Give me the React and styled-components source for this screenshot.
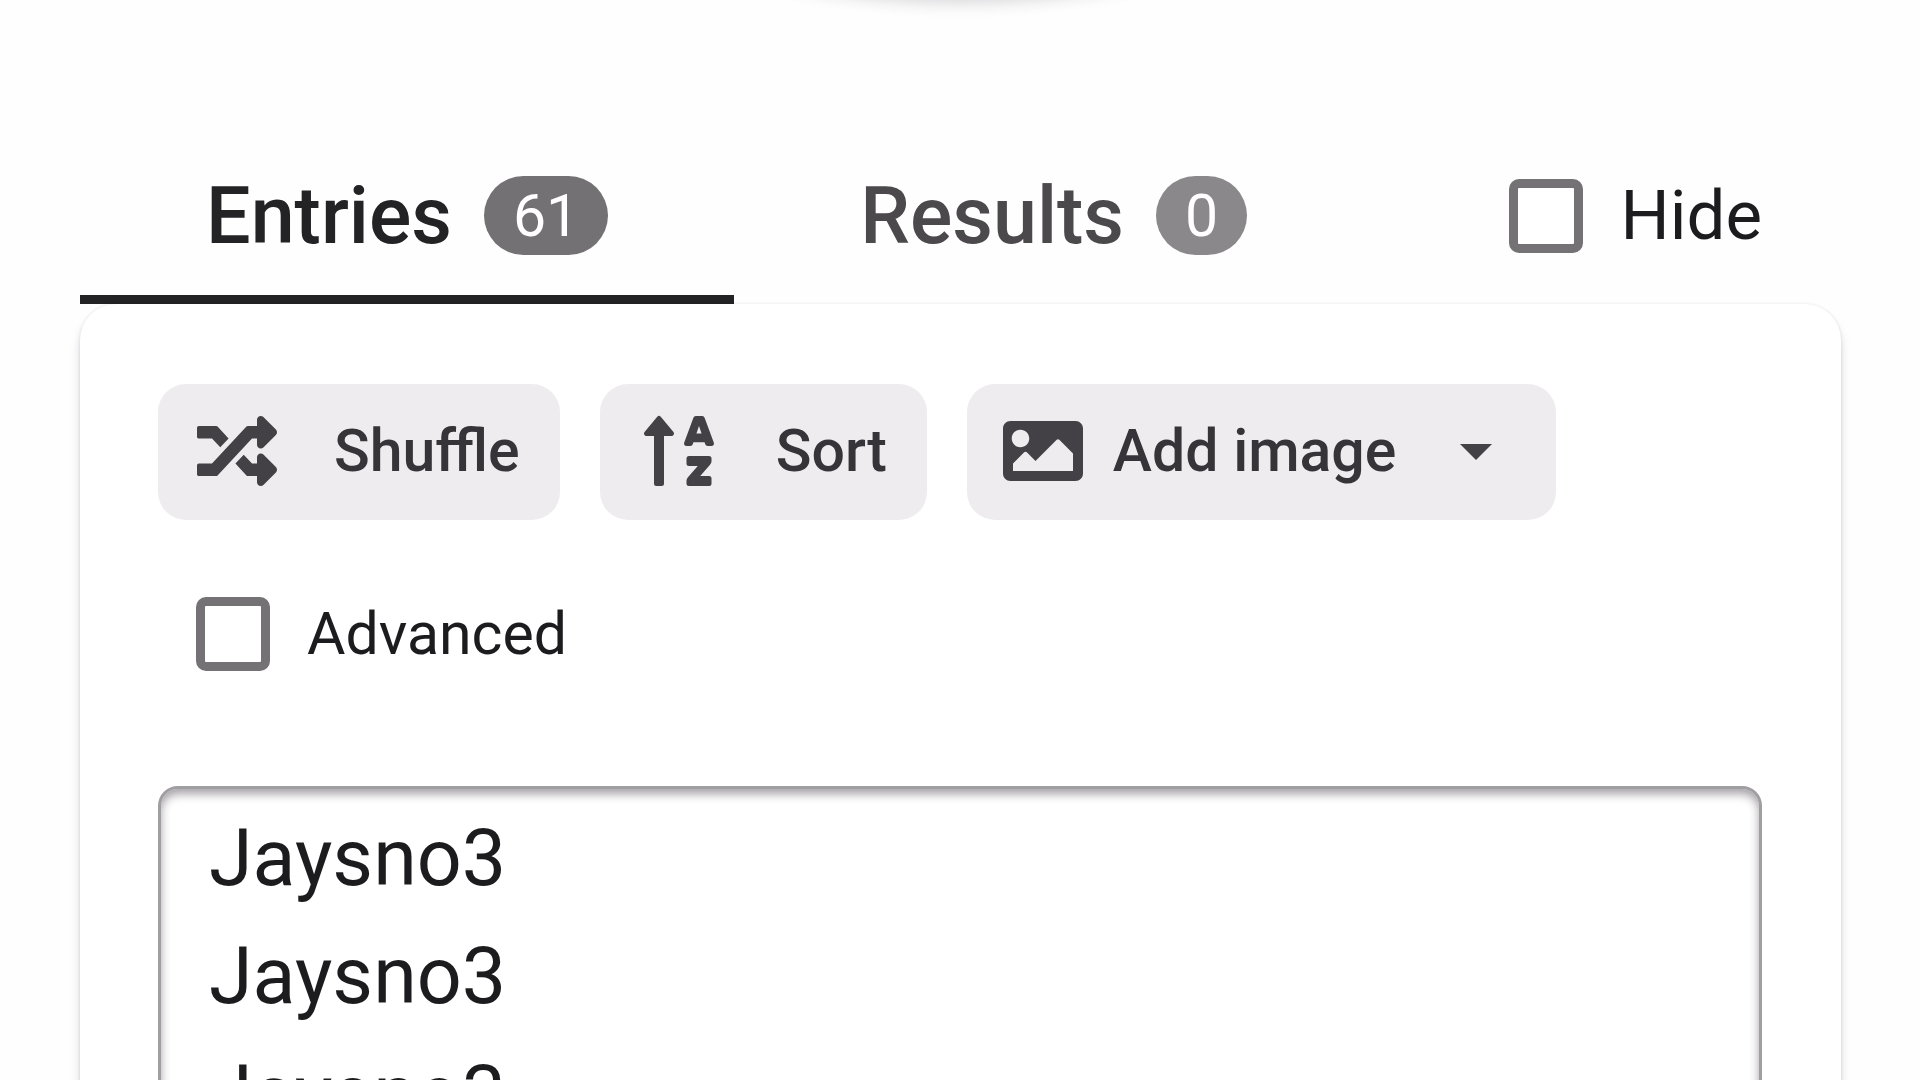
import React, { useState } from "react";
import styled, { createGlobalStyle, css } from "styled-components";
import { FaImage, FaRandom, FaSortAlphaUp } from "react-icons/fa";

const GlobalStyle = createGlobalStyle`
  *, *::before, *::after { box-sizing: border-box; }
  body {
    margin: 0;
    background: #fefefe;
    color: #1c1b1e;
    font-family: Roboto, "Liberation Sans", sans-serif;
  }
  button, textarea { font: inherit; color: inherit; }
`;

const Page = styled.main`
  height: 100vh;
  overflow: hidden;
  display: flex;
  flex-direction: column;
`;

const WheelStage = styled.div`
  flex: none;
  height: 136px;
  display: flex;
  justify-content: center;
  align-items: flex-end;
`;

const Wheel = styled.div`
  flex: none;
  width: calc(100% - 160px);
  aspect-ratio: 1;
  margin-bottom: 140px;
  border-radius: 50%;
  background: #fff;
  box-shadow: 0 4px 18px rgba(40, 30, 45, 0.24);
`;

const Panel = styled.section`
  flex: 1 0 auto;
  display: flex;
  flex-direction: column;
  padding: 0 79px 0 80px;
`;

const TabBar = styled.div`
  display: flex;
  align-items: stretch;
  padding-right: 79px;
`;

const Tab = styled.button`
  display: flex;
  align-items: center;
  gap: 32px;
  height: 168px;
  padding: 0 126px;
  border: 0;
  border-bottom: 9px solid ${(p) => (p.$active ? "#232224" : "transparent")};
  background: none;
  color: ${(p) => (p.$active ? "#232224" : "#4b494c")};
  font-size: 79px;
  font-weight: 500;
  line-height: 92px;
`;

const Badge = styled.span`
  padding: 0 29px;
  border-radius: 40px;
  background: ${(p) => (p.$active ? "#747174" : "#8a888a")};
  color: #fff;
  font-size: 59px;
  font-weight: 400;
  line-height: 79px;
`;

const CheckLabel = styled.label`
  display: inline-flex;
  align-items: center;
  gap: 37px;
  font-size: ${(p) => (p.$large ? 69 : 59)}px;
  line-height: 80px;
`;

const HideLabel = styled(CheckLabel)`
  margin-left: auto;
  padding-bottom: 9px;
`;

const CheckBox = styled.input`
  appearance: none;
  flex: none;
  width: 74px;
  height: 74px;
  margin: 0;
  border: 9px solid #747274;
  border-radius: 10px;
  background: ${(p) => (p.checked ? "#747274" : "#fff")};
`;

const Card = styled.div`
  flex: 1 0 auto;
  padding: 80px 79px 80px 78px;
  border-radius: 36px;
  background: #fff;
  box-shadow:
    0 0 3px rgba(60, 45, 70, 0.12),
    0 8px 10px rgba(60, 45, 70, 0.18);
`;

const Toolbar = styled.div`
  display: flex;
  flex-wrap: wrap;
  gap: 40px;
`;

const ToolButton = styled.button`
  display: flex;
  align-items: center;
  gap: ${(p) => (p.$compact ? 30 : 57)}px;
  height: 136px;
  padding: 0 40px 2px ${(p) => (p.$compact ? 36 : 39)}px;
  border: 0;
  border-radius: 28px;
  background: #eeecef;
  color: #363438;
  font-size: 59px;
  font-weight: 500;
  line-height: 80px;
`;

const iconStyle = css`
  flex: none;
  width: 80px;
  height: 80px;
  color: #434145;
  fill: currentColor;
`;

const ShuffleIcon = styled(FaRandom)`
  ${iconStyle}
`;

const SortIcon = styled(FaSortAlphaUp)`
  ${iconStyle}
`;

const ImageIcon = styled(FaImage)`
  ${iconStyle}
`;

const Caret = styled.svg`
  ${iconStyle}
  margin-left: 10px;
`;

const Options = styled.div`
  display: flex;
  padding: 74px 0 112px 38px;
`;

const Entries = styled.textarea`
  display: block;
  width: 100%;
  margin: 0;
  padding: 10px 48px;
  border: 3px solid #a09ea0;
  border-radius: 20px;
  outline: 0;
  resize: none;
  overflow: hidden;
  background: #fff;
  box-shadow: inset 0 5px 10px rgba(40, 30, 45, 0.42);
  font-size: 79px;
  line-height: 118px;
`;

export default function App() {
  const [tab, setTab] = useState("entries");
  const [hidden, setHidden] = useState(false);
  const [advanced, setAdvanced] = useState(false);
  const [names, setNames] = useState("Jaysno3\nJaysno3\nJaysno3");

  return (
    <>
      <GlobalStyle />
      <Page>
        <WheelStage>
          <Wheel />
        </WheelStage>
        <Panel>
          <TabBar>
            <Tab type="button" $active={tab === "entries"} onClick={() => setTab("entries")}>
              Entries
              <Badge $active={tab === "entries"}>61</Badge>
            </Tab>
            <Tab type="button" $active={tab === "results"} onClick={() => setTab("results")}>
              Results
              <Badge $active={tab === "results"}>0</Badge>
            </Tab>
            <HideLabel $large htmlFor="hide">
              <CheckBox
                id="hide"
                type="checkbox"
                checked={hidden}
                onChange={(e) => setHidden(e.target.checked)}
              />
              Hide
            </HideLabel>
          </TabBar>
          <Card>
            <Toolbar>
              <ToolButton type="button">
                <ShuffleIcon aria-hidden="true" />
                Shuffle
              </ToolButton>
              <ToolButton type="button">
                <SortIcon aria-hidden="true" />
                Sort
              </ToolButton>
              <ToolButton type="button" $compact>
                <ImageIcon aria-hidden="true" />
                Add image
                <Caret viewBox="0 0 80 80" aria-hidden="true">
                  <path d="M24 33H56L40 49Z" />
                </Caret>
              </ToolButton>
            </Toolbar>
            <Options>
              <CheckLabel htmlFor="advanced">
                <CheckBox
                  id="advanced"
                  type="checkbox"
                  checked={advanced}
                  onChange={(e) => setAdvanced(e.target.checked)}
                />
                Advanced
              </CheckLabel>
            </Options>
            <Entries
              aria-label="Entries"
              rows={8}
              spellCheck={false}
              value={names}
              onChange={(e) => setNames(e.target.value)}
            />
          </Card>
        </Panel>
      </Page>
    </>
  );
}
